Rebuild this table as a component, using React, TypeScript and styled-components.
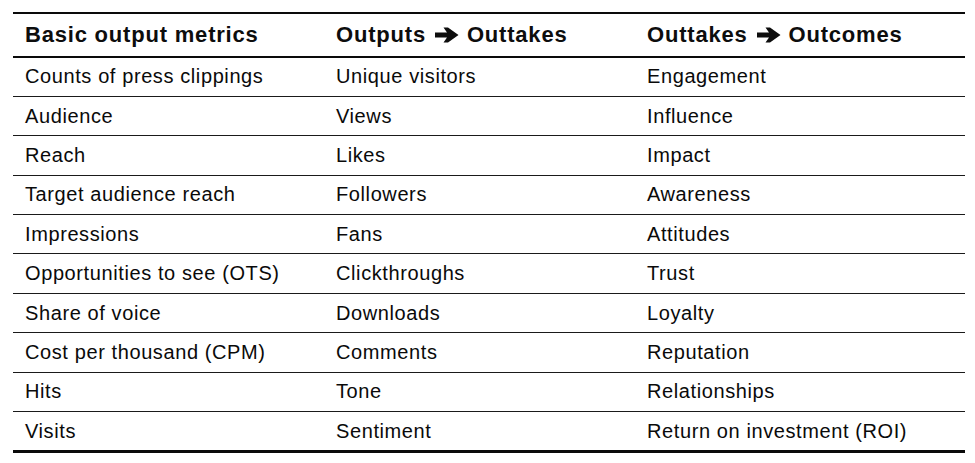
import React from "react";
import styled, { createGlobalStyle } from "styled-components";

const GlobalStyle = createGlobalStyle`
  html, body {
    margin: 0;
    padding: 0;
    background: #ffffff;
  }
  body {
    font-family: "Liberation Sans", Arial, sans-serif;
    color: #111111;
  }
`;

const Page = styled.div`
  width: 975px;
  height: 463px;
  padding: 12px 10px 0 13px;
  box-sizing: border-box;
  background: #ffffff;
`;

const Table = styled.div`
  width: 952px;
  display: grid;
  grid-template-columns: 311px 311px 330px;
  border-top: 2px solid #0a0a0a;
  border-bottom: 3px solid #0a0a0a;
`;

const HeadCell = styled.div`
  height: 41.5px;
  display: flex;
  align-items: center;
  padding-left: 12px;
  border-bottom: 2.5px solid #0a0a0a;
  font-weight: 700;
  font-size: 22px;
  letter-spacing: 0.8px;
  color: #0d0d0d;
  white-space: nowrap;
`;

const ArrowSvg = styled.svg`
  width: 24px;
  height: 16px;
  margin: 0 8px 0 9px;
  flex: none;
`;

const Arrow = () => (
  <ArrowSvg viewBox="0 0 24 16" aria-hidden="true">
    <polygon
      points="0,5.5 12,5.5 8.5,0.5 13,0.5 23.5,8 13,15.5 8.5,15.5 12,10.5 0,10.5"
      fill="#0d0d0d"
    />
  </ArrowSvg>
);

const Cell = styled.div<{ $last?: boolean }>`
  height: 38.4px;
  display: flex;
  align-items: center;
  padding-left: 12px;
  border-bottom: ${(p) => (p.$last ? "none" : "1px solid #1a1a1a")};
  font-size: 20px;
  letter-spacing: 0.6px;
  color: #0a0a0a;
  white-space: nowrap;
`;

const rows: [string, string, string][] = [
  ["Counts of press clippings", "Unique visitors", "Engagement"],
  ["Audience", "Views", "Influence"],
  ["Reach", "Likes", "Impact"],
  ["Target audience reach", "Followers", "Awareness"],
  ["Impressions", "Fans", "Attitudes"],
  ["Opportunities to see (OTS)", "Clickthroughs", "Trust"],
  ["Share of voice", "Downloads", "Loyalty"],
  ["Cost per thousand (CPM)", "Comments", "Reputation"],
  ["Hits", "Tone", "Relationships"],
  ["Visits", "Sentiment", "Return on investment (ROI)"],
];

export default function App() {
  return (
    <>
      <GlobalStyle />
      <Page>
        <Table>
          <HeadCell>Basic output metrics</HeadCell>
          <HeadCell>
            Outputs<Arrow />Outtakes
          </HeadCell>
          <HeadCell>
            Outtakes<Arrow />Outcomes
          </HeadCell>
          {rows.map((r, i) =>
            r.map((c, j) => (
              <Cell key={`${i}-${j}`} $last={i === rows.length - 1}>
                {c}
              </Cell>
            ))
          )}
        </Table>
      </Page>
    </>
  );
}
